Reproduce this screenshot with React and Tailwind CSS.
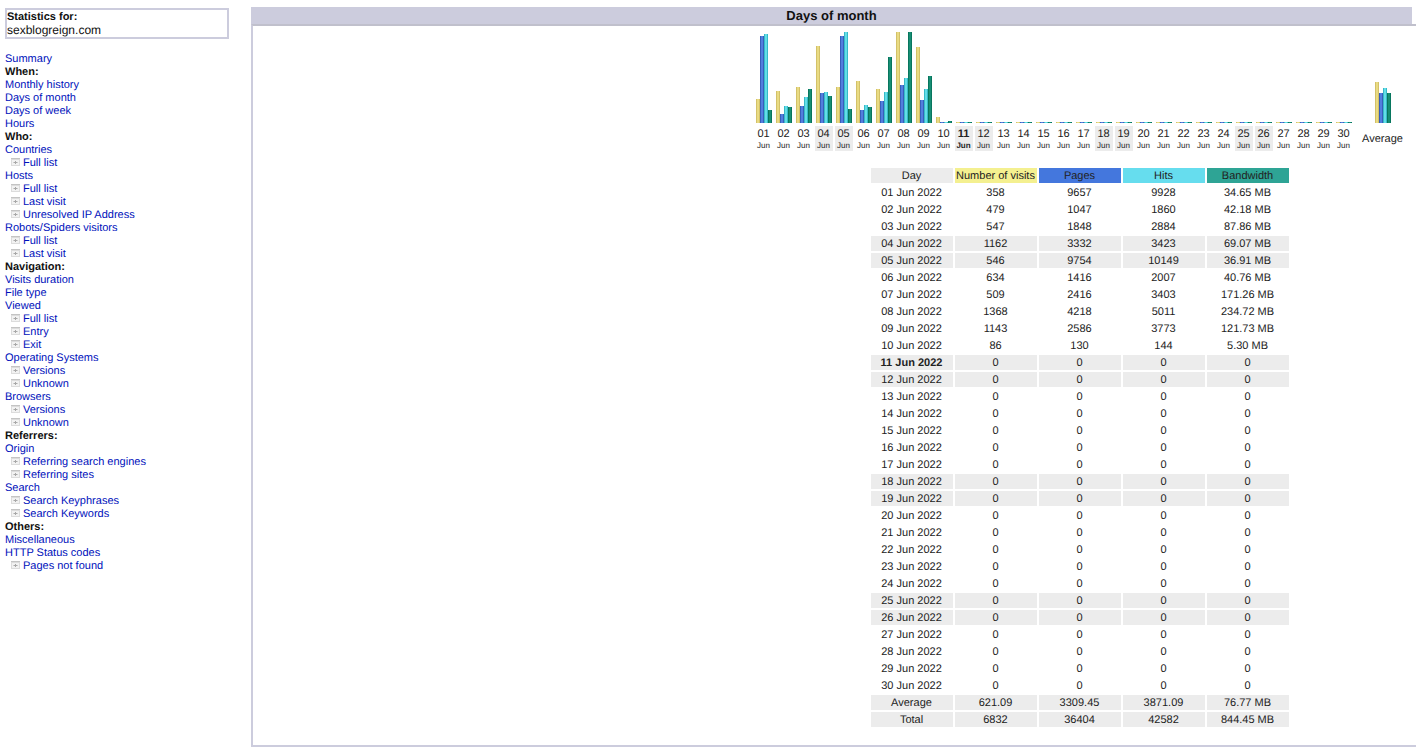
const NAV = [
  ['l', 'Summary'],
  ['h', 'When:'],
  ['l', 'Monthly history'],
  ['l', 'Days of month'],
  ['l', 'Days of week'],
  ['l', 'Hours'],
  ['h', 'Who:'],
  ['l', 'Countries'],
  ['s', 'Full list'],
  ['l', 'Hosts'],
  ['s', 'Full list'],
  ['s', 'Last visit'],
  ['s', 'Unresolved IP Address'],
  ['l', 'Robots/Spiders visitors'],
  ['s', 'Full list'],
  ['s', 'Last visit'],
  ['h', 'Navigation:'],
  ['l', 'Visits duration'],
  ['l', 'File type'],
  ['l', 'Viewed'],
  ['s', 'Full list'],
  ['s', 'Entry'],
  ['s', 'Exit'],
  ['l', 'Operating Systems'],
  ['s', 'Versions'],
  ['s', 'Unknown'],
  ['l', 'Browsers'],
  ['s', 'Versions'],
  ['s', 'Unknown'],
  ['h', 'Referrers:'],
  ['l', 'Origin'],
  ['s', 'Referring search engines'],
  ['s', 'Referring sites'],
  ['l', 'Search'],
  ['s', 'Search Keyphrases'],
  ['s', 'Search Keywords'],
  ['h', 'Others:'],
  ['l', 'Miscellaneous'],
  ['l', 'HTTP Status codes'],
  ['s', 'Pages not found'],
];

const FILLED = [
  [358, 9657, 9928, '34.65 MB', 34.65],
  [479, 1047, 1860, '42.18 MB', 42.18],
  [547, 1848, 2884, '87.86 MB', 87.86],
  [1162, 3332, 3423, '69.07 MB', 69.07],
  [546, 9754, 10149, '36.91 MB', 36.91],
  [634, 1416, 2007, '40.76 MB', 40.76],
  [509, 2416, 3403, '171.26 MB', 171.26],
  [1368, 4218, 5011, '234.72 MB', 234.72],
  [1143, 2586, 3773, '121.73 MB', 121.73],
  [86, 130, 144, '5.30 MB', 5.3],
];

const WEEKEND = [4, 5, 11, 12, 18, 19, 25, 26];

const DAYS = Array.from({ length: 30 }, (_, i) => {
  const row = FILLED[i] || [0, 0, 0, '0', 0];
  const num = String(i + 1).padStart(2, '0');
  return {
    num,
    date: `${num} Jun 2022`,
    visits: row[0],
    pages: row[1],
    hits: row[2],
    bandwidth: row[3],
    kb: row[4],
    weekend: WEEKEND.includes(i + 1),
    today: i + 1 === 11,
  };
});

const barHeight = (value, max) => Math.max(1, Math.round((value / max) * 91));

const BAR_COLORS = {
  visits: 'bg-[linear-gradient(90deg,#c8b45c,#f4e890,#c8b45c)]',
  pages: 'bg-[linear-gradient(90deg,#2a50a8,#5f8ef0,#2a50a8)]',
  hits: 'bg-[linear-gradient(90deg,#22a8b8,#78f0f8,#22a8b8)]',
  bandwidth: 'bg-[linear-gradient(90deg,#006a52,#1f9a80,#006a52)]',
};

const Bars = ({ visits, pages, hits, kb }) => (
  <div className="flex items-end justify-center h-[91px]">
    <div className={`w-1 ${BAR_COLORS.visits}`} style={{ height: barHeight(visits, 1368) }} />
    <div className={`w-1 ${BAR_COLORS.pages}`} style={{ height: barHeight(pages, 10149) }} />
    <div className={`w-1 ${BAR_COLORS.hits}`} style={{ height: barHeight(hits, 10149) }} />
    <div className={`w-1 ${BAR_COLORS.bandwidth}`} style={{ height: barHeight(kb, 234.72) }} />
  </div>
);

const NavItem = ({ type, label }) => {
  if (type === 'h') return <div className="h-[13px] leading-[15px] font-bold text-[#111]">{label}</div>;
  if (type === 's') {
    return (
      <div className="h-[13px] leading-[15px] flex items-start pl-1.5 text-[#0011bb]">
        <svg width="9" height="8" viewBox="0 0 9 8" className="mt-0.5 mr-[3px] shrink-0">
          <rect x="0" y="0" width="9" height="8" fill="#dcdcdc" />
          <rect x="0" y="0" width="9" height="1" fill="#c4c4c4" />
          <rect x="1" y="2" width="7" height="5" fill="#f2f2f2" />
          <path d="M2.5 4.5h4M4.5 3v3" stroke="#a8a8a8" strokeWidth="1" fill="none" />
        </svg>
        <a href="#">{label}</a>
      </div>
    );
  }
  return (
    <div className="h-[13px] leading-[15px] text-[#0011bb]">
      <a href="#">{label}</a>
    </div>
  );
};

const Cell = ({ className = '', children }) => (
  <div className={`h-[15px] leading-[17px] text-center text-[11px] text-[#222] whitespace-nowrap ${className}`}>
    {children}
  </div>
);

const Row = ({ cells, shaded, bold }) => (
  <div className="grid grid-cols-[repeat(5,82px)] gap-x-0.5">
    {cells.map((c, i) => (
      <Cell key={i} className={`${shaded ? 'bg-[#ececec]' : ''} ${bold && i === 0 ? 'font-bold' : ''}`}>
        {c}
      </Cell>
    ))}
  </div>
);

const App = () => {
  return (
    <div className="h-[748px] w-[1416px] overflow-hidden flex bg-white font-['Liberation_Sans',Arial,sans-serif] text-[11px] leading-[13px] [text-rendering:geometricPrecision]">
      <aside className="w-[251px] shrink-0 pl-[5px] pt-2">
        <div className="w-[224px] h-[31px] border-2 border-[#ccccdd] text-[#111]">
          <div className="font-bold h-3.5 leading-[15px]">Statistics for:</div>
          <div className="text-xs leading-[13px]">sexblogreign.com</div>
        </div>
        <nav className="mt-[13px]">
          {NAV.map(([type, label], i) => (
            <NavItem key={i} type={type} label={label} />
          ))}
        </nav>
      </aside>

      <main className="pt-[7px] shrink-0">
        <div className="w-[1161px] h-[17px] bg-[#ccccdd] text-center text-[13px] font-bold leading-[17px] text-[#111]">
          Days of month
        </div>
        <section className="w-[1657px] h-[723px] border-2 border-[#ccccdd] border-t-[#c0c0cc] flex flex-col items-center pt-1.5">
          <div className="w-[650px] flex">
            <div className="flex gap-0.5">
              {DAYS.map((d) => (
                <div key={d.num} className="w-[18px]">
                  <Bars {...d} />
                  <div
                    className={`mt-[3px] h-[25px] text-center text-[#222] ${d.weekend ? 'bg-[#ececec]' : ''} ${d.today ? 'font-bold' : ''}`}
                  >
                    <div className="text-[11px] h-3.5 leading-[17px]">{d.num}</div>
                    <div className="text-[8px] leading-[12px]">Jun</div>
                  </div>
                </div>
              ))}
            </div>
            <div className="ml-[9px] w-[42px]">
              <Bars visits={621.09} pages={3309.45} hits={3871.09} kb={76.77} />
              <div className="mt-[3px] text-center text-[11px] leading-[26px] text-[#222]">Average</div>
            </div>
          </div>

          <div className="mt-4 flex flex-col gap-y-0.5">
            <div className="grid grid-cols-[repeat(5,82px)] gap-x-0.5">
              <Cell className="bg-[#ececec]">Day</Cell>
              <Cell className="bg-[#f4f090]">Number of visits</Cell>
              <Cell className="bg-[#4477dd]">Pages</Cell>
              <Cell className="bg-[#66ddee]">Hits</Cell>
              <Cell className="bg-[#2ea495]">Bandwidth</Cell>
            </div>
            {DAYS.map((d) => (
              <Row
                key={d.num}
                shaded={d.weekend}
                bold={d.today}
                cells={[d.date, d.visits, d.pages, d.hits, d.bandwidth]}
              />
            ))}
            <Row shaded cells={['Average', '621.09', '3309.45', '3871.09', '76.77 MB']} />
            <Row shaded cells={['Total', '6832', '36404', '42582', '844.45 MB']} />
          </div>
        </section>
      </main>
    </div>
  );
};

export default App;
